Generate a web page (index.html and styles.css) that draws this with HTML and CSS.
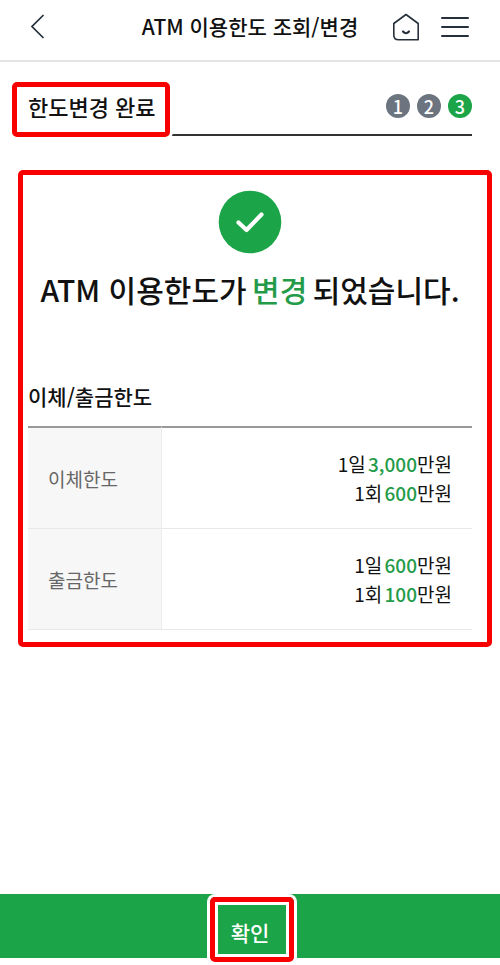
FILE: index.html
```html
<!DOCTYPE html>
<html lang="ko">
<head>
<meta charset="utf-8">
<meta name="viewport" content="width=device-width, initial-scale=1">
<title>ATM 이용한도 조회/변경</title>
<link rel="stylesheet" href="styles.css">
</head>
<body>
<header class="topbar">
  <button class="icon-button" type="button" aria-label="뒤로">
    <svg width="16" height="28" viewBox="0 0 16 28" fill="none" stroke="#26303a" stroke-width="1.7"><path d="M12.500 3 1 14.500 12.500 26"/></svg>
  </button>
  <h1 class="topbar-title">ATM 이용한도 조회/변경</h1>
  <div class="topbar-actions">
    <a class="icon-button" href="#" aria-label="홈">
      <svg width="28" height="30" viewBox="0 0 28 30" fill="none" stroke="#26303a" stroke-width="1.6" stroke-linejoin="round"><path d="M14 3.500 26.200 12.500V28.800H6.500Q1.800 28.800 1.800 24V12.500Z"/><path d="M11 20.500Q14 24 17 20.500" stroke-width="2.200" stroke-linecap="round"/></svg>
    </a>
    <button class="icon-button" type="button" aria-label="메뉴">
      <svg width="28" height="22" viewBox="0 0 28 22" fill="none" stroke="#26303a" stroke-width="2" stroke-linecap="round"><path d="M1 3H27M1 12H27M1 21H27"/></svg>
    </button>
  </div>
</header>
<main class="content">
  <div class="step-row">
    <h2 class="step-title">한도변경 완료</h2>
    <ol class="steps">
      <li class="step">1</li>
      <li class="step">2</li>
      <li class="step step-current" aria-current="step">3</li>
    </ol>
  </div>
  <section class="result">
    <svg class="check" width="64" height="64" viewBox="0 0 64 64" fill="none"><circle cx="32" cy="32" r="31.300" fill="#1ba548"/><path d="M20.500 32.500 28.500 40 43.500 24.500" stroke="#fff" stroke-width="4.200" stroke-linecap="round" stroke-linejoin="round"/></svg>
    <p class="message">ATM 이용한도가 <em>변경</em> 되었습니다.</p>
    <h3 class="table-title" id="limits">이체/출금한도</h3>
    <table class="limits" aria-labelledby="limits">
      <tbody>
        <tr><th scope="row">이체한도</th><td>1일 <em>3,000</em>만원<br>1회 <em>600</em>만원</td></tr>
        <tr><th scope="row">출금한도</th><td>1일 <em>600</em>만원<br>1회 <em>100</em>만원</td></tr>
      </tbody>
    </table>
  </section>
</main>
<footer class="footer">
  <button class="confirm" type="button"><span class="confirm-label">확인</span></button>
</footer>
</body>
</html>
```
FILE: styles.css
```css
* {
  box-sizing: border-box;
}

body {
  margin: 0;
  min-height: 100vh;
  display: flex;
  flex-direction: column;
  background: #fff;
  color: #111;
  font-family: "Noto Sans CJK KR", sans-serif;
}

h1,
h2,
h3,
p,
ol {
  margin: 0;
  padding: 0;
  font-weight: 500;
}

em {
  margin-left: -3px;
  font-style: normal;
  font-weight: 500;
  color: #239b49;
}

button {
  border: 0;
  padding: 0;
  background: none;
  font: inherit;
  cursor: pointer;
}

.topbar {
  display: grid;
  grid-template-columns: 1fr auto 1fr;
  align-items: center;
  height: 62px;
  padding: 0 31px 8px;
  border-bottom: 2px solid #e4e4e4;
}

.icon-button {
  display: flex;
  justify-self: start;
}

.topbar-title {
  font-size: 21px;
  line-height: 32px;
}

.topbar-actions {
  display: flex;
  justify-content: flex-end;
  align-items: center;
  gap: 21px;
}

.content {
  flex: 1;
}

.step-row {
  display: flex;
  justify-content: space-between;
  align-items: center;
  height: 58px;
  margin: 16px 28px 0;
  border-bottom: 2px solid #333;
}

.step-title {
  position: relative;
  z-index: 0;
  font-size: 22px;
  line-height: 32px;
}

.step-title::before {
  content: "";
  position: absolute;
  z-index: -1;
  inset: -8px -14px -15px -16px;
  border: 5px solid #f80000;
  border-radius: 5px;
  background: #fff;
  box-shadow: 0 0 0 3px #fff;
}

.steps {
  display: flex;
  gap: 7px;
  list-style: none;
}

.step {
  width: 24px;
  height: 24px;
  border-radius: 50%;
  background: #6c7480;
  color: #fff;
  font-size: 18px;
  line-height: 24px;
  text-align: center;
}

.step-current {
  background: #1ba548;
}

.result {
  margin: 34px 8px 0 18px;
  padding: 15px 15px 12px 5px;
  border: 5px solid #f80000;
  border-radius: 5px;
}

.check {
  display: block;
  margin: 0 auto;
}

.message {
  margin-top: 13px;
  font-size: 30px;
  line-height: 44px;
  text-align: center;
  white-space: nowrap;
}

.message em {
  margin-right: -3px;
}

.table-title {
  margin-top: 69px;
  font-size: 21px;
  line-height: 32px;
}

.limits {
  width: 100%;
  margin-top: 14px;
  border-collapse: separate;
  border-spacing: 0;
  font-size: 19px;
  line-height: 29px;
}

.limits th,
.limits td {
  height: 101px;
  padding: 20px;
  border-bottom: 1px solid #e8e8e8;
  font-weight: 400;
}

.limits tr:first-child th,
.limits tr:first-child td {
  height: 103px;
  border-top: 2px solid #999;
}

.limits th {
  width: 134px;
  border-right: 1px solid #ececec;
  background: #f7f7f7;
  color: #666;
  text-align: left;
}

.limits td {
  text-align: right;
}

.footer {
  margin-bottom: 7px;
  background: #1ba548;
}

.confirm {
  position: relative;
  display: flex;
  justify-content: center;
  align-items: center;
  width: 100%;
  height: 64px;
  padding-top: 12px;
  color: #fff;
  font-size: 21px;
  line-height: 32px;
}

.confirm-label {
  position: relative;
  font-weight: 500;
}

.confirm-label::before {
  content: "";
  position: absolute;
  inset: -19px -25px -14px -21px;
  border: 5px solid #f80000;
  border-radius: 5px;
  box-shadow: 0 0 0 3px #fff, inset 0 0 0 3px #fff;
}
```
